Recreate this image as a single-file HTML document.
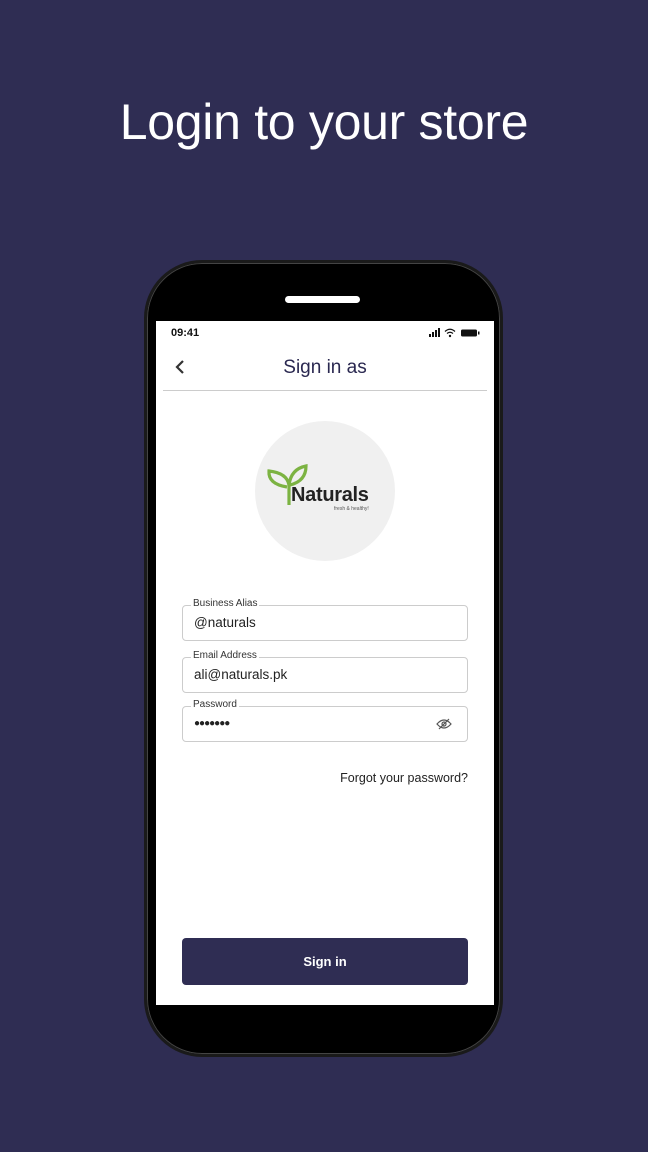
<!DOCTYPE html>
<html><head><meta charset="utf-8"><style>
*{margin:0;padding:0;box-sizing:border-box}
body{width:648px;height:1152px;background:#2f2d53;position:relative;overflow:hidden;font-family:"Liberation Sans",sans-serif}
.title{position:absolute;top:93px;left:0;width:648px;text-align:center;color:#fff;font-size:50px;font-weight:400;letter-spacing:-0.3px}
.phone{position:absolute;left:144px;top:260px;width:359px;height:797px;background:#000;border-radius:58px;border:3px solid #1a1a1a;box-shadow:inset 0 0 0 1px #444}
.pill{position:absolute;left:285px;top:296px;width:75px;height:7px;border-radius:4px;background:#fff}
.screen{position:absolute;left:156px;top:321px;width:338px;height:684px;background:#fff}
.abs{position:absolute}
.field{position:absolute;left:26px;width:286px;height:36px;border:1px solid #ccc;border-radius:4px}
.lab{position:absolute;left:8px;top:-8px;background:#fff;padding:0 2px;font-size:10px;color:#333}
.val{position:absolute;left:11px;top:9px;font-size:13.5px;color:#222}
</style></head><body>
<div class="title">Login to your store</div>
<div class="phone"></div>
<div class="pill"></div>
<div class="screen">
  <div class="abs" style="left:15px;top:6px;font-size:11px;font-weight:bold;color:#111">09:41</div>
  <svg class="abs" style="left:272px;top:7px" width="54" height="10" viewBox="0 0 54 10">
    <rect x="1" y="6" width="2" height="3" fill="#111"/><rect x="4" y="4" width="2" height="5" fill="#111"/><rect x="7" y="2" width="2" height="7" fill="#111"/><rect x="10" y="0" width="2" height="9" fill="#111"/>
    <path d="M17 3.5 Q22 -1 27 3.5 M19 5.5 Q22 3 25 5.5" stroke="#111" stroke-width="1.3" fill="none"/><circle cx="22" cy="8" r="1.2" fill="#111"/>
    <rect x="33" y="1.5" width="16" height="7" rx="1.5" fill="#111"/><rect x="50" y="3.5" width="1.5" height="3" fill="#111"/>
  </svg>
  <svg class="abs" style="left:18px;top:38px" width="12" height="16" viewBox="0 0 12 16"><path d="M9 2 L3 8 L9 14" stroke="#333" stroke-width="2.2" fill="none"/></svg>
  <div class="abs" style="left:0;width:338px;top:36px;text-align:center;font-size:19px;color:#2a2850">Sign in as</div>
  <div class="abs" style="left:7px;top:69px;width:324px;height:1px;background:#ccc"></div>
  <div class="abs" style="left:99px;top:100px;width:140px;height:140px;border-radius:50%;background:#f0f0f0"></div>
  <svg class="abs" style="left:110px;top:142px" width="42" height="44" viewBox="0 0 42 44">
    <path d="M23 42 L23 22 Q21 10 3 8 Q2 21 21 24" stroke="#7cb342" stroke-width="3.2" fill="none"/>
    <path d="M23 22 Q25 6 40 3 Q40 18 24 22" stroke="#7cb342" stroke-width="3.2" fill="none"/>
  </svg>
  <div class="abs" style="left:135px;top:163px;font-size:20px;font-weight:bold;color:#222;letter-spacing:-0.3px">Naturals</div>
  <div class="abs" style="left:178px;top:185px;font-size:5px;color:#555">fresh &amp; healthy!</div>
  <div class="field" style="top:284px"><span class="lab">Business Alias</span><span class="val">@naturals</span></div>
  <div class="field" style="top:336px"><span class="lab">Email Address</span><span class="val">ali@naturals.pk</span></div>
  <div class="field" style="top:385px"><span class="lab">Password</span><span class="val" style="top:11px;font-size:10px;letter-spacing:-1px">●●●●●●●</span>
    <svg class="abs" style="left:253px;top:11px" width="16" height="12" viewBox="0 0 16 12"><path d="M1 6 Q8 -2 15 6 Q8 14 1 6Z" stroke="#555" stroke-width="1.2" fill="none"/><circle cx="8" cy="6" r="2" stroke="#555" stroke-width="1.2" fill="none"/><path d="M3 11 L13 1" stroke="#555" stroke-width="1.2"/></svg>
  </div>
  <div class="abs" style="right:26px;top:450px;font-size:12.5px;color:#222">Forgot your password?</div>
  <div class="abs" style="left:26px;top:617px;width:286px;height:47px;background:#2f2d53;border-radius:4px;color:#fff;font-size:13px;font-weight:bold;text-align:center;line-height:47px">Sign in</div>
</div>
</body></html>
